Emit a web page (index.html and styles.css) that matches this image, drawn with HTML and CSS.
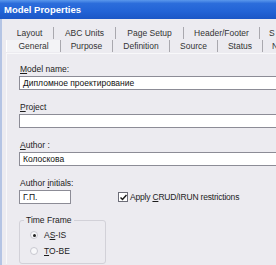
FILE: index.html
```html
<!DOCTYPE html>
<html>
<head>
    <meta charset="utf-8">
    <title>Model Properties</title>
    <link rel="stylesheet" href="styles.css">
</head>
<body>
    <div class="window">
        <div class="titlebar">Model Properties</div>
        <div class="client">
            <div class="tabs">
                <div class="tabrow row1">
                    <span class="tab">Layout</span>
                    <span class="tab">ABC Units</span>
                    <span class="tab">Page Setup</span>
                    <span class="tab">Header/Footer</span>
                    <span class="tab last">S</span>
                </div>
                <div class="tabrow row2">
                    <span class="tab current">General</span>
                    <span class="tab">Purpose</span>
                    <span class="tab">Definition</span>
                    <span class="tab">Source</span>
                    <span class="tab">Status</span>
                    <span class="tab last">N</span>
                </div>
            </div>
            <div class="panel">
                <div class="field">
                    <label class="lbl"><u>M</u>odel name:</label>
                    <div class="input">Дипломное проектирование</div>
                </div>
                <div class="field">
                    <label class="lbl"><u>P</u>roject</label>
                    <div class="input"></div>
                </div>
                <div class="field">
                    <label class="lbl"><u>A</u>uthor :</label>
                    <div class="input">Колоскова</div>
                </div>
                <div class="field">
                    <label class="lbl">Author <u>i</u>nitials:</label>
                    <div class="initrow">
                        <div class="input short">Г.П.</div>
                        <div class="check">
                            <span class="box">
                                <svg width="7" height="7" viewBox="0 0 7 7"><path d="M0.5 3.5 L2.5 5.5 L6.5 1" fill="none" stroke="#1a1a1a" stroke-width="1.5"/></svg>
                            </span>
                            <span class="checktext">Apply <u>C</u>RUD/IRUN restrictions</span>
                        </div>
                    </div>
                </div>
                <fieldset class="group">
                    <legend>Time Frame</legend>
                    <div class="radio">
                        <span class="dot on"></span>
                        <span>A<u>S</u>-IS</span>
                    </div>
                    <div class="radio">
                        <span class="dot"></span>
                        <span><u>T</u>O-BE</span>
                    </div>
                </fieldset>
            </div>
        </div>
    </div>
</body>
</html>
```

FILE: styles.css
```css
html,
body {
    margin: 0;
    padding: 0;
}

body {
    width: 276px;
    height: 265px;
    overflow: hidden;
    background-color: #ecebf0;
    font-family: "Liberation Sans", Arial, sans-serif;
    font-size: 8.5px;
    color: #1c1c1c;
}

.window {
    height: 265px;
    border-left: 2px solid #b4c4e4;
}

.titlebar {
    height: 19px;
    line-height: 20px;
    margin-left: -2px;
    padding-left: 4px;
    color: white;
    font-weight: bold;
    font-size: 9.5px;
    background: linear-gradient(#5a98ec 0%, #2c6ddb 18%, #2263d6 60%, #1b56c6 100%);
}

.client {
    padding-left: 4px;
}

.tabs {
    padding-top: 8px;
    color: #333;
}

.tabrow {
    display: grid;
    height: 12px;
    line-height: 12px;
}

.row1 {
    grid-template-columns: 48px 62px 68px 76px auto;
}

.row2 {
    grid-template-columns: 55px 52px 57px 48px 45px auto;
    margin-top: 1px;
}

.tab {
    text-align: center;
    border-right: 1px solid #a9a8ae;
    white-space: nowrap;
    overflow: hidden;
}

.tab.last {
    border-right: none;
    text-align: left;
    padding-left: 9px;
}

.tab.current {
    background-color: #f3f3f6;
    border-left: 1px solid #ffffff;
}

.panel {
    border-left: 1px solid #f8f8fa;
    border-top: 1px solid #f8f8fa;
    margin-top: 1px;
    padding: 10px 0 0 12px;
}

.field {
    margin-bottom: 12px;
}

.lbl {
    display: block;
    height: 11px;
    line-height: 11px;
    margin-bottom: 1px;
    padding-left: 1px;
}

.input {
    box-sizing: border-box;
    height: 14px;
    line-height: 12px;
    width: 280px;
    padding-left: 3px;
    background-color: white;
    border: 1px solid #8c8c96;
    color: #111;
}

.initrow {
    display: flex;
    align-items: center;
}

.input.short {
    width: 52px;
}

.check {
    display: flex;
    align-items: center;
    margin-left: 47px;
}

.checktext {
    letter-spacing: -0.2px;
}

.box {
    box-sizing: border-box;
    width: 10px;
    height: 10px;
    margin-right: 2px;
    border: 1px solid #6d6d78;
    background-color: white;
    display: flex;
    align-items: center;
    justify-content: center;
}

.group {
    box-sizing: border-box;
    width: 87px;
    height: 49px;
    margin: 0;
    margin-top: -1px;
    padding: 2px 0 0 10px;
    border: 1px solid #d2d1d8;
    border-radius: 3px;
}

.group legend {
    padding: 0 2px;
    margin-left: -6px;
    line-height: 10px;
}

.radio {
    display: flex;
    align-items: center;
    height: 16px;
}

.dot {
    box-sizing: border-box;
    width: 8px;
    height: 8px;
    border-radius: 50%;
    border: 1px solid #c8c8d0;
    background-color: #f8f8fa;
    margin-right: 6px;
    position: relative;
}

.dot.on::after {
    content: "";
    position: absolute;
    left: 1.5px;
    top: 1.5px;
    width: 3px;
    height: 3px;
    border-radius: 50%;
    background-color: #222;
}
```
